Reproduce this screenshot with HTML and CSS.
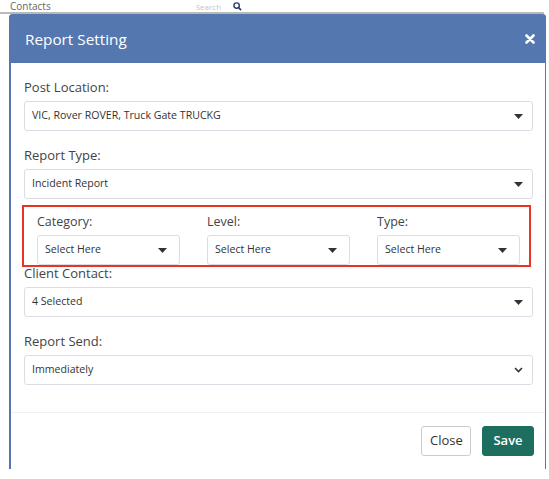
FILE: index.html
```html
<!DOCTYPE html>
<html lang="en">
<head>
    <meta charset="UTF-8">
    <meta name="viewport" content="width=device-width, initial-scale=1.0">
    <title>Report Setting</title>
<link rel="stylesheet" href="styles.css">
</head>
<body>
    <div class="page-strip">
        <span class="strip-title">Contacts</span>
        <span class="strip-hint">Search</span>
        <svg class="strip-search" width="9" height="9" viewBox="0 0 10 10">
            <circle cx="4" cy="4" r="3" fill="none" stroke="#2c3e66" stroke-width="1.6"/>
            <path d="M6 6 L9 9" stroke="#2c3e66" stroke-width="1.8"/>
        </svg>
    </div>

    <div class="modal">
        <div class="modal-header">
            <h4>Report Setting</h4>
            <svg class="close-x" width="10" height="10" viewBox="0 0 10 10">
                <path d="M1.5 1.5 L8.5 8.5 M8.5 1.5 L1.5 8.5" stroke="#fff" stroke-width="2.6" stroke-linecap="round"/>
            </svg>
        </div>

        <div class="modal-body">
            <div class="field">
                <label>Post Location:</label>
                <div class="select">
                    <span>VIC, Rover ROVER, Truck Gate TRUCKG</span>
                    <svg class="caret" width="9" height="5" viewBox="0 0 9 5"><path d="M0 0 H9 L4.5 5 Z" fill="#333"/></svg>
                </div>
            </div>

            <div class="field">
                <label>Report Type:</label>
                <div class="select">
                    <span>Incident Report</span>
                    <svg class="caret" width="9" height="5" viewBox="0 0 9 5"><path d="M0 0 H9 L4.5 5 Z" fill="#333"/></svg>
                </div>
            </div>

            <div class="highlight">
                <div class="field">
                    <label>Category:</label>
                    <div class="select">
                        <span>Select Here</span>
                        <svg class="caret" width="9" height="5" viewBox="0 0 9 5"><path d="M0 0 H9 L4.5 5 Z" fill="#333"/></svg>
                    </div>
                </div>
                <div class="field">
                    <label>Level:</label>
                    <div class="select">
                        <span>Select Here</span>
                        <svg class="caret" width="9" height="5" viewBox="0 0 9 5"><path d="M0 0 H9 L4.5 5 Z" fill="#333"/></svg>
                    </div>
                </div>
                <div class="field">
                    <label>Type:</label>
                    <div class="select">
                        <span>Select Here</span>
                        <svg class="caret" width="9" height="5" viewBox="0 0 9 5"><path d="M0 0 H9 L4.5 5 Z" fill="#333"/></svg>
                    </div>
                </div>
            </div>

            <div class="field tight">
                <label>Client Contact:</label>
                <div class="select">
                    <span>4 Selected</span>
                    <svg class="caret" width="9" height="5" viewBox="0 0 9 5"><path d="M0 0 H9 L4.5 5 Z" fill="#333"/></svg>
                </div>
            </div>

            <div class="field last">
                <label>Report Send:</label>
                <div class="select">
                    <span>Immediately</span>
                    <svg class="chevron" width="9" height="6" viewBox="0 0 9 6"><path d="M1 1 L4.5 4.5 L8 1" fill="none" stroke="#333" stroke-width="1.6"/></svg>
                </div>
            </div>
        </div>

        <div class="modal-footer">
            <button class="btn btn-default">Close</button>
            <button class="btn btn-save">Save</button>
        </div>
    </div>
</body>
</html>
```

FILE: styles.css
```css
body {
    font-family: "Open Sans", "Noto Sans", sans-serif;
    margin: 0;
    padding: 0;
    background-color: white;
    width: 549px;
    height: 479px;
    overflow: hidden;
}
.page-strip {
    height: 12px;
    border-bottom: 2px solid #b9b9b9;
    display: flex;
    align-items: flex-end;
    width: 544px;
}
.strip-title {
    font-size: 10px;
    color: #666;
    margin-left: 10px;
    line-height: 11px;
}
.strip-hint {
    font-size: 8px;
    color: #c4c4c4;
    margin-left: 145px;
    line-height: 10px;
}
.strip-search {
    margin-left: 12px;
    margin-bottom: 1px;
}
.modal {
    margin-left: 9px;
    width: 537px;
    box-sizing: border-box;
    border-left: 2px solid #5676ae;
    border-right: 1px solid #5676ae;
    border-radius: 4px 4px 0 0;
    height: 455px;
    background: white;
}
.modal-header {
    background-color: #5577b0;
    height: 49px;
    margin: 0 -1px 0 -2px;
    border-radius: 4px 4px 0 0;
    display: flex;
    align-items: center;
    justify-content: space-between;
    padding: 0 11px 0 16px;
}
.modal-header h4 {
    margin: 0;
    font-size: 15.3px;
    font-weight: 400;
    color: white;
}
.close-x {
    margin-top: 1px;
}
.modal-body {
    padding: 15px 12px 27px 13px;
    border-bottom: 1px solid #f0f0f0;
}
.field label {
    display: block;
    font-size: 13px;
    line-height: 18px;
    color: #444;
    margin-bottom: 5px;
}
.field {
    margin-bottom: 15px;
}
.field.tight {
    margin-top: -3px;
}
.field.last {
    margin-bottom: 0;
}
.select {
    height: 30px;
    box-sizing: border-box;
    border: 1px solid #dcdde4;
    border-radius: 3px;
    display: flex;
    align-items: center;
    justify-content: space-between;
    padding: 0 9px 3px 7px;
    font-size: 10.6px;
    color: #333;
}
.select svg {
    margin-top: 3px;
}
.highlight {
    border: 2px solid #ea3323;
    margin: -9px 2px 0 -2px;
    padding: 6px 9px 0 13px;
    display: grid;
    grid-template-columns: 1fr 1fr 1fr;
    gap: 27px;
}
.highlight .field {
    margin-bottom: 0;
}
.highlight .field label {
    font-size: 12.5px;
    margin-bottom: 4px;
}
.highlight .select {
    padding: 0 12px 3px 7px;
}
.modal-footer {
    display: flex;
    justify-content: flex-end;
    gap: 11px;
    padding: 13px 11px 0 0;
}
.btn {
    height: 30px;
    box-sizing: border-box;
    border-radius: 3px;
    font-family: "Open Sans", sans-serif;
    font-size: 13px;
    padding: 0 8px 2px;
    cursor: pointer;
}
.btn-default {
    background: white;
    border: 1px solid #ccc;
    color: #333;
    width: 50px;
}
.btn-save {
    background-color: #1e6e5f;
    border: 1px solid #1e6e5f;
    color: white;
    font-weight: 600;
    width: 52px;
}
```
